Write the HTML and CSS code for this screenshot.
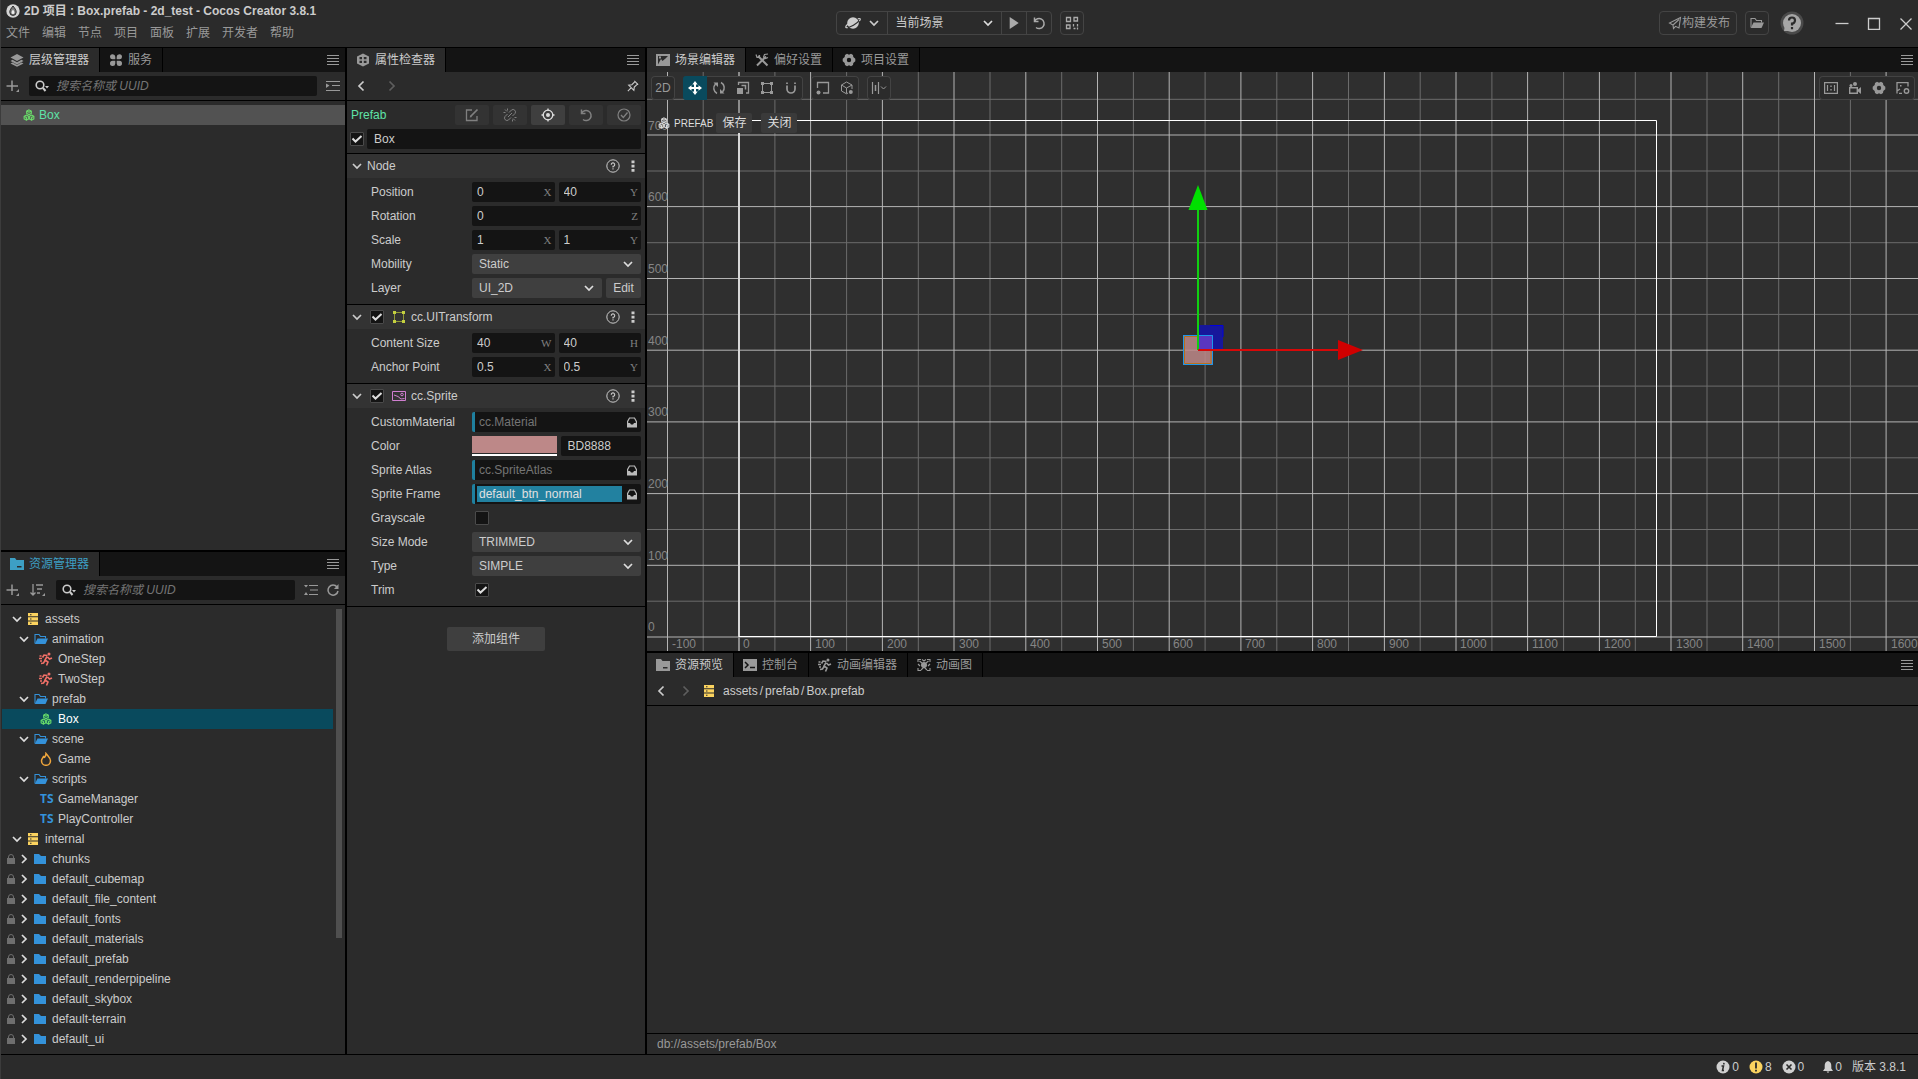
FILE: index.html
```html
<!DOCTYPE html>
<html lang="zh-CN">
<head>
<meta charset="utf-8">
<title>2D 项目 : Box.prefab - 2d_test - Cocos Creator 3.8.1</title>
<link rel="stylesheet" href="styles.css">
</head>
<body>
<svg class="sprite" aria-hidden="true">
  <symbol id="i-menu" viewBox="0 0 12 12"><path d="M0 1.5H12M0 4.5H12M0 7.5H12M0 10.5H12" stroke="currentColor" stroke-width="1"/></symbol>
  <symbol id="i-layers" viewBox="0 0 14 14"><path d="M7 1 13.500 4.500 7 8 .5 4.500Z" fill="currentColor"/><path d="M2.500 6.800.5 8 7 11.500 13.500 8 11.500 6.800 7 9.300ZM2.500 9.500.5 10.500 7 13.800 13.500 10.500 11.500 9.500 7 12Z" fill="currentColor"/></symbol>
  <symbol id="i-clover" viewBox="0 0 14 14"><g fill="currentColor"><path d="M1 4a2.600 2.600 0 0 1 5.300-.3V6.300H3.500A2.500 2.500 0 0 1 1 4ZM13 4a2.600 2.600 0 0 0-5.300-.3V6.300h2.800A2.500 2.500 0 0 0 13 4ZM1 10.200a2.600 2.600 0 0 0 5.300.3V7.700H3.500A2.500 2.500 0 0 0 1 10.200ZM13 10.200a2.600 2.600 0 0 1-5.300.3V7.700h2.800A2.500 2.500 0 0 1 13 10.200Z"/></g></symbol>
  <symbol id="i-plus" viewBox="0 0 14 14"><path d="M6 1.500V12M.5 7H12" stroke="currentColor" stroke-width="1.500"/><path d="M13 10V13H10Z" fill="currentColor"/></symbol>
  <symbol id="i-sort" viewBox="0 0 16 14"><path d="M3 1V12M.5 9.500 3 12 5.500 9.500M6 2H13M7 6H12M7 10H10" stroke="currentColor" stroke-width="1.300" fill="none"/><path d="M15 10V13H12Z" fill="currentColor"/></symbol>
  <symbol id="i-search" viewBox="0 0 14 14"><circle cx="5" cy="6" r="3.800" fill="none" stroke="currentColor" stroke-width="1.600"/><path d="M8 9 10.500 12" stroke="currentColor" stroke-width="2"/><path d="M10 7H14L12 9.500Z" fill="currentColor"/></symbol>
  <symbol id="i-indent" viewBox="0 0 14 12"><path d="M0 1.500H14M6 5.500H14M0 10.500H14" stroke="currentColor"/><path d="M0 3.500 3.500 5.500 0 8Z" fill="currentColor"/></symbol>
  <symbol id="i-collapse" viewBox="0 0 14 12"><path d="M5 1.500H14M6 6H14M5 10.500H14" stroke="currentColor"/><path d="M0 1H4L2 3.500ZM2 8 4 11H0Z" fill="currentColor"/></symbol>
  <symbol id="i-refresh" viewBox="0 0 12 12"><path d="M10 3A5 5 0 1 0 11 7" fill="none" stroke="currentColor" stroke-width="1.500"/><path d="M11.500 0V5H7Z" fill="currentColor"/></symbol>
  <symbol id="i-prefab" viewBox="0 0 14 14"><g fill="none" stroke="currentColor" stroke-width="1.200"><path fill="currentColor" fill-opacity=".2" d="M7 1 9.700 2.300V5.300L7 6.700 4.300 5.300V2.300ZM4 7 6.600 8.400V11.500L4 13 1.300 11.500V8.400ZM10 7 12.700 8.400V11.500L10 13 7.400 11.500V8.400Z"/><path d="M4.500 2.500 7 3.800 9.500 2.500M1.500 8.600 4 9.900V13M10 13V9.900L12.500 8.600"/></g></symbol>
  <symbol id="i-inspect" viewBox="0 0 14 14"><path fill="currentColor" fill-rule="evenodd" d="M7 .5 13 3.500V10.500L7 13.500 1 10.500V3.500ZM3.500 4V6.300H6V4ZM7.800 4V6.300H10.500V4ZM3.500 7.800V10H6V7.800ZM7.800 7.800V10H10.500V7.800Z"/></symbol>
  <symbol id="i-left" viewBox="0 0 8 12"><path d="M6.500 1.500 2 6 6.500 10.500" fill="none" stroke="currentColor" stroke-width="1.700"/></symbol>
  <symbol id="i-right" viewBox="0 0 8 12"><path d="M1.500 1.500 6 6 1.500 10.500" fill="none" stroke="currentColor" stroke-width="1.700"/></symbol>
  <symbol id="i-down" viewBox="0 0 10 10"><path d="M1 3 5 7 9 3" fill="none" stroke="currentColor" stroke-width="1.700"/></symbol>
  <symbol id="i-fold" viewBox="0 0 10 10"><path d="M3 1 7 5 3 9" fill="none" stroke="currentColor" stroke-width="1.700"/></symbol>
  <symbol id="i-pin" viewBox="0 0 14 14"><path d="M8.500 1 13 5.500M9.300 1.800 5.700 5.500 2 6 8 12 8.500 8.300 12.200 4.700M5 9 1 13" fill="none" stroke="currentColor" stroke-width="1.300"/></symbol>
  <symbol id="i-edit" viewBox="0 0 14 14"><path d="M7 2H1.500V12.500H12V8" fill="none" stroke="currentColor" stroke-width="1.300"/><path d="M6 8 12.500 1.500" stroke="currentColor" stroke-width="1.700"/><path d="M4.700 9.500 5.300 7 7.200 8.900Z" fill="currentColor"/></symbol>
  <symbol id="i-unlink" viewBox="0 0 14 14"><path d="M6 4.500 8.500 2A2.500 2.500 0 0 1 12 5.500L9.500 8M8 9.500 5.500 12A2.500 2.500 0 0 1 2 8.500L4.500 6M5 9 9 5M2 1.500 4 3.500M4.500.5V2.500M.5 4.500H2.500M12 12.500 10 10.500M9.500 13.500V11.500M13.500 9.500H11.500" fill="none" stroke="currentColor" stroke-width="1"/></symbol>
  <symbol id="i-target" viewBox="0 0 14 14"><circle cx="7" cy="7" r="4.800" fill="none" stroke="currentColor" stroke-width="1.300"/><circle cx="7" cy="7" r="2" fill="currentColor"/><path d="M7 .5V3M7 11V13.500M.5 7H3M11 7H13.500" stroke="currentColor" stroke-width="1.300"/></symbol>
  <symbol id="i-undo" viewBox="0 0 14 14"><path d="M2.500 1.500V5.500H6.500M2.500 5.500A5 5 0 1 1 4 11.500" fill="none" stroke="currentColor" stroke-width="1.500"/></symbol>
  <symbol id="i-ok" viewBox="0 0 14 14"><circle cx="7" cy="7" r="6" fill="none" stroke="currentColor" stroke-width="1.200"/><path d="M4 7 6.300 9.500 10.500 4.500" fill="none" stroke="currentColor" stroke-width="1.300"/></symbol>
  <symbol id="i-help" viewBox="0 0 14 14"><circle cx="7" cy="7" r="6.200" fill="none" stroke="currentColor"/><path d="M5.300 5.700A1.700 1.700 0 1 1 7 7.300V8.500M7 9.300V10.500" fill="none" stroke="currentColor" stroke-width="1.100"/></symbol>
  <symbol id="i-more" viewBox="0 0 4 14"><path fill="currentColor" d="M.5 1.500h3v2.700h-3ZM.5 5.700h3v2.700h-3ZM.5 10h3v2.700h-3Z"/></symbol>
  <symbol id="i-uitrans" viewBox="0 0 12 12"><path d="M1.500 1.500H10.500V10.500H1.500Z" fill="none" stroke="#8f9738"/><path fill="#c3cf3f" d="M0 0h3v3H0ZM9 0h3v3H9ZM0 9h3v3H0ZM9 9h3v3H9Z"/></symbol>
  <symbol id="i-spr" viewBox="0 0 14 12"><path d="M.5 1.500H13.500V10.500H.5Z" fill="none" stroke="#d07fd0"/><path d="M2 5 6 6.500 9 9 12.500 8.500" fill="none" stroke="#d07fd0"/><circle cx="10" cy="4.500" r="1.300" fill="none" stroke="#d07fd0"/></symbol>
  <symbol id="i-tray" viewBox="0 0 12 12"><path d="M1.600 8V5.500L3.500 2H8.500L10.400 5.500V8" fill="none" stroke="currentColor" stroke-width="1.200"/><path d="M1 7H4L5 8.500H7L8 7H11V11.500H1Z" fill="currentColor"/></symbol>
  <symbol id="i-foldert" viewBox="0 0 14 12"><path fill="currentColor" fill-rule="evenodd" d="M0 0H5L6.500 2H14V12H0ZM7 8V9.500H11.500V8Z"/></symbol>
  <symbol id="i-folder" viewBox="0 0 12 12"><path fill="#3492da" d="M0 1H5L7 3H12V11H0Z"/></symbol>
  <symbol id="i-open" viewBox="0 0 14 12"><path d="M1 10.500V1.500H5L6.500 3.500H11.500V5.500" fill="none" stroke="currentColor" stroke-width="1.100"/><path fill="currentColor" d="M3.500 5.500H14L11.500 11H.8Z"/></symbol>
  <symbol id="i-db" viewBox="0 0 12 12"><path fill="#fbd35f" fill-rule="evenodd" d="M1 0H11V3.300H1ZM3 1.200V2.200H4.500V1.200ZM1 4.300H11V7.600H1ZM3 5.500V6.500H4.500V5.500ZM1 8.600H11V12H1ZM3 9.800V10.800H4.500V9.800Z"/></symbol>
  <symbol id="i-run" viewBox="0 0 14 14"><circle cx="10" cy="2" r="1.500" fill="currentColor"/><path d="M8.500 3.500 5 3 3.500 5.500M8 4.500 6 8 9 10 7.500 13.500M8.500 5 10.500 7 13 6M6 8.500 4.500 11 2 11.500M.5 4H2.500M0 6.500H3M1 9H3" fill="none" stroke="currentColor" stroke-width="1.600"/></symbol>
  <symbol id="i-fire" viewBox="0 0 12 14"><path d="M6 1.500C8.500 4.500 10.500 6 10.500 8.800A4.400 4.400 0 0 1 1.500 8.800C1.500 6.500 3 6 3.500 4.500L4.700 5.200C5.500 4 6 3 6 1.500Z" fill="none" stroke="#f0a63c" stroke-width="1.500"/></symbol>
  <symbol id="i-lock" viewBox="0 0 8 10"><path fill="currentColor" d="M0 4H8V10H0Z"/><path d="M1.500 4.500V3A2.500 2.500 0 0 1 6.500 3V4.500" fill="none" stroke="currentColor"/></symbol>
  <symbol id="i-scene" viewBox="0 0 14 12"><path fill="currentColor" fill-rule="evenodd" d="M0 0H14V12H0ZM2 2V10.500L5 5 6.500 7 9.500 4.500 12 2ZM3 2.500H5V4.500H3Z"/></symbol>
  <symbol id="i-tools" viewBox="0 0 14 14"><path d="M3 3 12.500 12.500M11 3.500 2 12.500" stroke="currentColor" stroke-width="2"/><path d="M1 1.500 2 4.500H4.500L4.500 2M13 1 9.500 1.500 8.500 4 10.500 5.500 13 4.500" fill="none" stroke="currentColor" stroke-width="1.200"/></symbol>
  <symbol id="i-gear" viewBox="0 0 14 14"><path fill="currentColor" fill-rule="evenodd" d="M5 .8 7 1.700 9 .8 11 2 11.300 4 13.300 5.700V8.300L11.300 10 11 12 9 13.200 7 12.300 5 13.200 3 12 2.700 10 .7 8.300V5.700L2.700 4 3 2ZM7 4.800A2.200 2.200 0 1 0 7 9.200 2.200 2.200 0 1 0 7 4.800Z"/></symbol>
  <symbol id="i-term" viewBox="0 0 14 12"><path fill="currentColor" d="M0 0H14V12H0Z"/><path d="M2 3 5 6 2 9M7 8.500H12" fill="none" stroke="#141414" stroke-width="1.500"/></symbol>
  <symbol id="i-graph" viewBox="0 0 14 14"><circle cx="7" cy="7" r="3" fill="currentColor"/><path d="M1 4V1.500H4M10 1.500H13V4M1 10V12.500H4M10 12.500H13V10M2.500 3 5 5M11.500 3 9 5M4 12 7 9 10 12M5 1.500 7 3 9 1.500M1 6 3 8M13 6 11 8" fill="none" stroke="currentColor" stroke-width="1.100"/></symbol>
  <symbol id="i-move" viewBox="0 0 14 14"><path fill="currentColor" d="M7 0 9.700 3.500H8V6H10.500V4.300L14 7 10.500 9.700V8H8V10.500H9.700L7 14 4.300 10.500H6V8H3.500V9.700L0 7 3.500 4.300V6H6V3.500H4.300Z"/></symbol>
  <symbol id="i-rotate" viewBox="0 0 14 14"><path d="M5 12.500A6 6 0 0 1 3.500 3M9 1.500A6 6 0 0 1 10.500 11" fill="none" stroke="currentColor" stroke-width="1.500"/><path d="M1.500 1.500H6V6ZM12.500 12.500H8V8Z" fill="currentColor"/></symbol>
  <symbol id="i-scale" viewBox="0 0 14 14"><path d="M2.500 4V1.500H12.500V12H10" fill="none" stroke="currentColor" stroke-width="1.300"/><path d="M1 7H7V13H1Z" fill="currentColor"/><path d="M5.500 4.500H9.500V8.500" fill="none" stroke="currentColor" stroke-width="1.500"/></symbol>
  <symbol id="i-rect" viewBox="0 0 14 14"><path d="M2.500 2.500H11.500V11.500H2.500Z" fill="none" stroke="currentColor"/><path fill="currentColor" d="M1 1h3v3H1ZM10 1h3v3h-3ZM1 10h3v3H1ZM10 10h3v3h-3Z"/></symbol>
  <symbol id="i-magnet" viewBox="0 0 14 14"><path d="M3 1.500V3M11 1.500V3M3 4.500V8A4 4 0 0 0 11 8V4.500" fill="none" stroke="currentColor" stroke-width="1.700"/></symbol>
  <symbol id="i-pivot" viewBox="0 0 14 14"><path d="M1.500 7V1.500H12.500V12H7" fill="none" stroke="currentColor" stroke-width="1.300"/><circle cx="2.500" cy="11.500" r="2" fill="currentColor"/></symbol>
  <symbol id="i-cube" viewBox="0 0 14 14"><path d="M12 8V4L6.500 1 1.500 4V10L6.500 12.800 8 12M1.500 4 6.500 7 12 4M6.500 7V12.500" fill="none" stroke="currentColor"/><circle cx="10.800" cy="11" r="2" fill="currentColor"/></symbol>
  <symbol id="i-align" viewBox="0 0 16 14"><path d="M1.500 1V13M7.500 1V13" stroke="currentColor" stroke-width="1.200"/><path d="M4.500 4V10" stroke="currentColor" stroke-width="1.500"/><path d="M10 5.500 12.500 8 15 5.500" fill="none" stroke="currentColor"/></symbol>
  <symbol id="i-one" viewBox="0 0 14 12"><path d="M.6.6H13.400V11.400H.6ZM3.500 3V9M10.500 3V9" fill="none" stroke="currentColor" stroke-width="1.200"/><path d="M6.300 3.500h1.400v1.400H6.300ZM6.300 7h1.400v1.400H6.300Z" fill="currentColor"/></symbol>
  <symbol id="i-cam" viewBox="0 0 14 12"><path d="M1.700 5.700H9.300V11.300H1.700Z" fill="none" stroke="currentColor" stroke-width="1.400"/><path fill="currentColor" d="M10 7.500 13 5V12L10 9.500Z"/><circle cx="3" cy="3.500" r="1.500" fill="currentColor"/><circle cx="7" cy="2" r="2" fill="currentColor"/></symbol>
  <symbol id="i-shot" viewBox="0 0 14 12"><path d="M1 11.500V.7H12V4.500M1 9 4 7M3 11.300H6" fill="none" stroke="currentColor" stroke-width="1.300"/><path fill="currentColor" d="M4 3h1.500v1.500H4Z"/><circle cx="10.500" cy="9" r="2.200" fill="none" stroke="currentColor" stroke-width="1.400"/></symbol>
  <symbol id="i-planet" viewBox="0 0 16 14"><circle cx="8" cy="7" r="5.800" fill="currentColor"/><path d="M1.500 11.500C5 11.500 12 8 15 3.500" fill="none" stroke="#2b2b2b" stroke-width="1.200"/><path d="M3 8C0 10.500 0 12 2.800 11.700M12.800 2.800C15.500 2 16 3 14.300 5" fill="none" stroke="currentColor" stroke-width="1.200"/></symbol>
  <symbol id="i-play" viewBox="0 0 12 14"><path fill="currentColor" d="M1 0 11.500 7 1 14Z"/></symbol>
  <symbol id="i-qr" viewBox="0 0 14 14"><path d="M1.500 1.500H5.500V5.500H1.500ZM9 1.500H12.500V5H9ZM1.500 9H5V12.500H1.500ZM8.500 8V10.500M12.500 8V10.500M8.500 12.500H10.500M12.500 11.500V13.500" fill="none" stroke="currentColor" stroke-width="1.300"/></symbol>
  <symbol id="i-send" viewBox="0 0 14 14"><path d="M12.500 1.500 1.500 7 5 9 5.500 12.500 7.500 10.300 11 12ZM5 9 11 3.500" fill="none" stroke="currentColor" stroke-width="1.100"/></symbol>
  <symbol id="i-drop" viewBox="0 0 14 14"><circle cx="7" cy="7" r="6.700" fill="#d4d4d4"/><path d="M7 2C9 4.500 10.200 6 10.200 8.200A3.200 3.200 0 0 1 3.800 8.200C3.800 6 5 4.500 7 2Z" fill="#777" stroke="#2b2b2b"/><path d="M7 5.500C8 7 8.500 7.600 8.500 8.500A1.500 1.500 0 0 1 5.500 8.500C5.500 7.600 6 7 7 5.500Z" fill="#eee"/></symbol>
  <symbol id="i-q" viewBox="0 0 24 24"><circle cx="12" cy="12" r="11.500" fill="#4a4a4a"/><circle cx="12" cy="12" r="9" fill="#a6a6a6"/><path d="M4 20 5 14 10 20Z" fill="#a6a6a6"/><path d="M9 9.500A3 3 0 1 1 12 12.500V14.500M12 16V18.300" fill="none" stroke="#2b2b2b" stroke-width="2.200"/></symbol>
  <symbol id="i-info" viewBox="0 0 14 14"><circle cx="7" cy="7" r="6.500" fill="#d0d0d0"/><path d="M8 2.800 7.700 4.500M5.500 6H7.500L6.500 10.500H8" fill="none" stroke="#2b2b2b" stroke-width="1.500"/></symbol>
  <symbol id="i-warn" viewBox="0 0 14 14"><circle cx="7" cy="7" r="6.500" fill="#fbd35f"/><path d="M7 2.500V8.500M7 9.800V11.500" stroke="#2b2b2b" stroke-width="1.800"/></symbol>
  <symbol id="i-err" viewBox="0 0 14 14"><circle cx="7" cy="7" r="6.500" fill="#d0d0d0"/><path d="M4.500 4.500 9.500 9.500M9.500 4.500 4.500 9.500" stroke="#2b2b2b" stroke-width="1.600"/></symbol>
  <symbol id="i-bell" viewBox="0 0 10 12"><path fill="#d0d0d0" d="M5 0C7.500.8 8.300 2.500 8.300 5V7.500L10 10H0L1.700 7.500V5C1.700 2.500 2.500.8 5 0ZM3.500 10.500H6.500L5 12Z"/></symbol>
</svg>

<div class="app">
  <header class="titlebar">
    <div class="brand">
      <h1 class="title"><svg class="ic14"><use href="#i-drop"/></svg>2D 项目 : Box.prefab - 2d_test - Cocos Creator 3.8.1</h1>
      <nav class="menus"><button>文件</button><button>编辑</button><button>节点</button><button>项目</button><button>面板</button><button>扩展</button><button>开发者</button><button>帮助</button></nav>
    </div>
    <div class="runbar">
      <div class="rungroup">
        <button class="platform" aria-label="预览平台"><svg class="ic16"><use href="#i-planet"/></svg><svg class="ic10"><use href="#i-down"/></svg></button>
        <select class="scene-select" aria-label="场景"><option>当前场景</option></select>
        <button class="run" aria-label="运行"><svg class="ic12"><use href="#i-play"/></svg></button>
        <button class="run" aria-label="刷新"><svg class="ic14"><use href="#i-undo"/></svg></button>
      </div>
      <button class="square" aria-label="二维码"><svg class="ic14"><use href="#i-qr"/></svg></button>
    </div>
    <div class="winbar">
      <button class="build"><svg class="ic14"><use href="#i-send"/></svg>构建发布</button>
      <button class="square" aria-label="打开项目"><svg class="ic14"><use href="#i-open"/></svg></button>
      <button class="helpbtn" aria-label="帮助"><svg class="ic24"><use href="#i-q"/></svg></button>
      <div class="wincontrols">
        <button aria-label="最小化"><svg class="ic14" viewBox="0 0 14 14"><path d="M.5 7.500H13.500" stroke="currentColor" stroke-width="1.300"/></svg></button>
        <button aria-label="最大化"><svg class="ic14" viewBox="0 0 14 14"><path d="M1.500 2.500H12.500V13.500H1.500Z" fill="none" stroke="currentColor" stroke-width="1.300"/></svg></button>
        <button aria-label="关闭窗口"><svg class="ic14" viewBox="0 0 14 14"><path d="M1.500 2.500 12.500 13.500M12.500 2.500 1.500 13.500" stroke="currentColor" stroke-width="1.300"/></svg></button>
      </div>
    </div>
  </header>

  <main class="workspace">
    <div class="stack left">
      <section class="panel">
        <div class="tabs">
          <button class="tab active"><svg class="ic14"><use href="#i-layers"/></svg>层级管理器</button>
          <button class="tab"><svg class="ic14"><use href="#i-clover"/></svg>服务</button>
          <button class="tabmenu" aria-label="菜单"><svg class="ic12"><use href="#i-menu"/></svg></button>
        </div>
        <div class="toolbar">
          <button aria-label="新建节点"><svg class="ic14"><use href="#i-plus"/></svg></button>
          <label class="search"><svg class="ic14"><use href="#i-search"/></svg><input type="text" placeholder="搜索名称或 UUID" aria-label="搜索节点"></label>
          <button aria-label="展开"><svg class="ic14"><use href="#i-indent"/></svg></button>
        </div>
        <div class="nodes"><div class="noderow"><svg class="ic12 green"><use href="#i-prefab"/></svg>Box</div></div>
      </section>
      <section class="panel">
        <div class="tabs">
          <button class="tab active focus"><svg class="ic14"><use href="#i-foldert"/></svg>资源管理器</button>
          <button class="tabmenu" aria-label="菜单"><svg class="ic12"><use href="#i-menu"/></svg></button>
        </div>
        <div class="toolbar">
          <button aria-label="新建资源"><svg class="ic14"><use href="#i-plus"/></svg></button>
          <button class="sort" aria-label="排序"><svg class="ic16"><use href="#i-sort"/></svg></button>
          <label class="search"><svg class="ic14"><use href="#i-search"/></svg><input type="text" placeholder="搜索名称或 UUID" aria-label="搜索资源"></label>
          <button aria-label="折叠"><svg class="ic14"><use href="#i-collapse"/></svg></button>
          <button class="reload" aria-label="刷新"><svg class="ic12"><use href="#i-refresh"/></svg></button>
        </div>
        <div class="treewrap">
          <ul class="tree">
            <li class="l0"><svg class="ic10"><use href="#i-down"/></svg><svg class="ic12"><use href="#i-db"/></svg><span>assets</span></li>
            <li class="l1"><svg class="ic10"><use href="#i-down"/></svg><svg class="wide blue"><use href="#i-open"/></svg><span>animation</span></li>
            <li class="l2"><svg class="tall red"><use href="#i-run"/></svg><span>OneStep</span></li>
            <li class="l2"><svg class="tall red"><use href="#i-run"/></svg><span>TwoStep</span></li>
            <li class="l1"><svg class="ic10"><use href="#i-down"/></svg><svg class="wide blue"><use href="#i-open"/></svg><span>prefab</span></li>
            <li class="l2 selected"><svg class="ic12 green"><use href="#i-prefab"/></svg><span>Box</span></li>
            <li class="l1"><svg class="ic10"><use href="#i-down"/></svg><svg class="wide blue"><use href="#i-open"/></svg><span>scene</span></li>
            <li class="l2"><svg class="tall"><use href="#i-fire"/></svg><span>Game</span></li>
            <li class="l1"><svg class="ic10"><use href="#i-down"/></svg><svg class="wide blue"><use href="#i-open"/></svg><span>scripts</span></li>
            <li class="l2"><b class="ts">TS</b><span>GameManager</span></li>
            <li class="l2"><b class="ts">TS</b><span>PlayController</span></li>
            <li class="l0"><svg class="ic10"><use href="#i-down"/></svg><svg class="ic12"><use href="#i-db"/></svg><span>internal</span></li>
            <li class="locked"><svg class="lock"><use href="#i-lock"/></svg><svg class="ic10"><use href="#i-fold"/></svg><svg class="ic12"><use href="#i-folder"/></svg><span>chunks</span></li>
            <li class="locked"><svg class="lock"><use href="#i-lock"/></svg><svg class="ic10"><use href="#i-fold"/></svg><svg class="ic12"><use href="#i-folder"/></svg><span>default_cubemap</span></li>
            <li class="locked"><svg class="lock"><use href="#i-lock"/></svg><svg class="ic10"><use href="#i-fold"/></svg><svg class="ic12"><use href="#i-folder"/></svg><span>default_file_content</span></li>
            <li class="locked"><svg class="lock"><use href="#i-lock"/></svg><svg class="ic10"><use href="#i-fold"/></svg><svg class="ic12"><use href="#i-folder"/></svg><span>default_fonts</span></li>
            <li class="locked"><svg class="lock"><use href="#i-lock"/></svg><svg class="ic10"><use href="#i-fold"/></svg><svg class="ic12"><use href="#i-folder"/></svg><span>default_materials</span></li>
            <li class="locked"><svg class="lock"><use href="#i-lock"/></svg><svg class="ic10"><use href="#i-fold"/></svg><svg class="ic12"><use href="#i-folder"/></svg><span>default_prefab</span></li>
            <li class="locked"><svg class="lock"><use href="#i-lock"/></svg><svg class="ic10"><use href="#i-fold"/></svg><svg class="ic12"><use href="#i-folder"/></svg><span>default_renderpipeline</span></li>
            <li class="locked"><svg class="lock"><use href="#i-lock"/></svg><svg class="ic10"><use href="#i-fold"/></svg><svg class="ic12"><use href="#i-folder"/></svg><span>default_skybox</span></li>
            <li class="locked"><svg class="lock"><use href="#i-lock"/></svg><svg class="ic10"><use href="#i-fold"/></svg><svg class="ic12"><use href="#i-folder"/></svg><span>default-terrain</span></li>
            <li class="locked"><svg class="lock"><use href="#i-lock"/></svg><svg class="ic10"><use href="#i-fold"/></svg><svg class="ic12"><use href="#i-folder"/></svg><span>default_ui</span></li>
          </ul>
          <div class="track"><div class="thumb"></div></div>
        </div>
      </section>
    </div>

    <section class="panel inspector">
      <div class="tabs">
        <button class="tab active"><svg class="ic14"><use href="#i-inspect"/></svg>属性检查器</button>
        <button class="tabmenu" aria-label="菜单"><svg class="ic12"><use href="#i-menu"/></svg></button>
      </div>
      <div class="navrow">
        <button aria-label="后退"><svg class="arrow"><use href="#i-left"/></svg></button>
        <button class="dim" aria-label="前进"><svg class="arrow"><use href="#i-right"/></svg></button>
        <button class="pin" aria-label="锁定"><svg class="ic12"><use href="#i-pin"/></svg></button>
      </div>
      <div class="prefabrow">
        <span class="prefabname">Prefab</span>
        <button class="op" aria-label="编辑" disabled><svg class="ic14"><use href="#i-edit"/></svg></button>
        <button class="op" aria-label="取消关联" disabled><svg class="ic14"><use href="#i-unlink"/></svg></button>
        <button class="op on" aria-label="定位"><svg class="ic14"><use href="#i-target"/></svg></button>
        <button class="op" aria-label="还原" disabled><svg class="ic14"><use href="#i-undo"/></svg></button>
        <button class="op" aria-label="应用" disabled><svg class="ic14"><use href="#i-ok"/></svg></button>
      </div>
      <div class="namerow"><input type="checkbox" checked aria-label="启用节点"><input class="field" type="text" value="Box" aria-label="节点名称"></div>

      <section class="group">
        <h2 class="grouphead"><svg class="ic10"><use href="#i-down"/></svg><span class="gname">Node</span><svg class="ic14"><use href="#i-help"/></svg><svg class="more"><use href="#i-more"/></svg></h2>
        <div class="prop"><label for="px">Position</label><div class="val"><div class="num"><input id="px" value="0"><span>X</span></div><div class="num"><input value="40" aria-label="Position Y"><span>Y</span></div></div></div>
        <div class="prop"><label for="rz">Rotation</label><div class="val"><div class="num"><input id="rz" value="0"><span>Z</span></div></div></div>
        <div class="prop"><label for="sx">Scale</label><div class="val"><div class="num"><input id="sx" value="1"><span>X</span></div><div class="num"><input value="1" aria-label="Scale Y"><span>Y</span></div></div></div>
        <div class="prop"><label for="mob">Mobility</label><div class="val"><select id="mob"><option>Static</option></select></div></div>
        <div class="prop"><label for="lay">Layer</label><div class="val"><select id="lay"><option>UI_2D</option></select><button class="editbtn">Edit</button></div></div>
      </section>

      <section class="group">
        <h2 class="grouphead"><svg class="ic10"><use href="#i-down"/></svg><input type="checkbox" checked aria-label="cc.UITransform"><svg class="ic12 uit"><use href="#i-uitrans"/></svg><span class="gname">cc.UITransform</span><svg class="ic14"><use href="#i-help"/></svg><svg class="more"><use href="#i-more"/></svg></h2>
        <div class="prop"><label for="cw">Content Size</label><div class="val"><div class="num"><input id="cw" value="40"><span>W</span></div><div class="num"><input value="40" aria-label="Height"><span>H</span></div></div></div>
        <div class="prop"><label for="ax">Anchor Point</label><div class="val"><div class="num"><input id="ax" value="0.5"><span>X</span></div><div class="num"><input value="0.5" aria-label="Anchor Y"><span>Y</span></div></div></div>
      </section>

      <section class="group">
        <h2 class="grouphead"><svg class="ic10"><use href="#i-down"/></svg><input type="checkbox" checked aria-label="cc.Sprite"><svg class="ic14"><use href="#i-spr"/></svg><span class="gname">cc.Sprite</span><svg class="ic14"><use href="#i-help"/></svg><svg class="more"><use href="#i-more"/></svg></h2>
        <div class="prop"><label for="mat">CustomMaterial</label><div class="val"><div class="asset"><input id="mat" placeholder="cc.Material" readonly><svg class="ic12"><use href="#i-tray"/></svg></div></div></div>
        <div class="prop"><label for="col">Color</label><div class="val colorval"><button class="swatch" aria-label="选择颜色"></button><input class="field" id="col" type="text" value="BD8888"></div></div>
        <div class="prop"><label for="atl">Sprite Atlas</label><div class="val"><div class="asset"><input id="atl" placeholder="cc.SpriteAtlas" readonly><svg class="ic12"><use href="#i-tray"/></svg></div></div></div>
        <div class="prop"><label for="frm">Sprite Frame</label><div class="val"><div class="asset filled"><input id="frm" value="default_btn_normal" readonly><svg class="ic12"><use href="#i-tray"/></svg></div></div></div>
        <div class="prop"><label for="gry">Grayscale</label><div class="val chk"><input type="checkbox" id="gry"></div></div>
        <div class="prop"><label for="szm">Size Mode</label><div class="val"><select id="szm"><option>TRIMMED</option></select></div></div>
        <div class="prop"><label for="typ">Type</label><div class="val"><select id="typ"><option>SIMPLE</option></select></div></div>
        <div class="prop"><label for="trm">Trim</label><div class="val chk"><input type="checkbox" id="trm" checked></div></div>
      </section>
      <div class="addrow"><button class="addbtn">添加组件</button></div>
    </section>

    <div class="stack right">
      <section class="panel">
        <div class="tabs">
          <button class="tab active"><svg class="ic14"><use href="#i-scene"/></svg>场景编辑器</button>
          <button class="tab"><svg class="ic14"><use href="#i-tools"/></svg>偏好设置</button>
          <button class="tab"><svg class="ic14"><use href="#i-gear"/></svg>项目设置</button>
          <button class="tabmenu" aria-label="菜单"><svg class="ic12"><use href="#i-menu"/></svg></button>
        </div>
        <div class="viewport">
          <svg class="grid" aria-label="场景">
            <path class="minor" d="M56.200 0V579M127.900 0V579M199.600 0V579M271.300 0V579M343 0V579M414.700 0V579M486.400 0V579M558.100 0V579M629.800 0V579M701.500 0V579M773.200 0V579M844.900 0V579M916.600 0V579M988.300 0V579M1060 0V579M1131.700 0V579M1203.400 0V579M0 529.200H2400M0 457.500H2400M0 385.800H2400M0 314.100H2400M0 242.400H2400M0 170.700H2400M0 99H2400M0 27.300H2400"/>
            <path class="major" d="M20.500 0V579M163.600 0V579M235.400 0V579M307 0V579M378.800 0V579M450.500 0V579M522.200 0V579M593.900 0V579M665.600 0V579M737.400 0V579M809 0V579M880.600 0V579M952.400 0V579M1024 0V579M1095.700 0V579M1167.500 0V579M1239.100 0V579M0 565H2400M0 493.300H2400M0 421.600H2400M0 349.900H2400M0 278.200H2400M0 206.500H2400M0 134.600H2400M0 63H2400"/>
            <path d="M92 0V48M92 565V579" stroke="#8c8c8c" stroke-width="2"/>
            <path d="M92 48V565" stroke="#d8d8d8" stroke-width="2"/>
            <path class="frame" d="M92 48.500H1009.500V564.500H92"/>
            <g class="ruler">
              <text x="25" y="576">-100</text><text x="96" y="576">0</text><text x="168" y="576">100</text><text x="240" y="576">200</text><text x="312" y="576">300</text><text x="383" y="576">400</text><text x="455" y="576">500</text><text x="526" y="576">600</text><text x="598" y="576">700</text><text x="670" y="576">800</text><text x="742" y="576">900</text><text x="813" y="576">1000</text><text x="885" y="576">1100</text><text x="957" y="576">1200</text><text x="1029" y="576">1300</text><text x="1100" y="576">1400</text><text x="1172" y="576">1500</text><text x="1244" y="576">1600</text>
              <text x="1" y="559">0</text><text x="1" y="488">100</text><text x="1" y="416">200</text><text x="1" y="344">300</text><text x="1" y="273">400</text><text x="1" y="201">500</text><text x="1" y="129">600</text><text x="1" y="58">700</text>
            </g>
            <path d="M552 253H576V277H552Z" fill="#17179b"/>
            <path d="M563 253.500H576V265" fill="none" stroke="#0000e0"/>
            <path d="M536 263H566V293H536Z" fill="#bd8888" fill-opacity=".85"/>
            <path d="M552 263H566V277H552Z" fill="#5a36c0"/>
            <path d="M537.500 291V264.500H552M537.500 291.500H564V279" fill="none" stroke="#b86f1c"/>
            <path d="M536.500 263.500H565.500V292.500H536.500Z" fill="none" stroke="#1c96ec"/>
            <path d="M551 278V137" stroke="#10d010" stroke-width="2"/>
            <path d="M551 113 560.500 138H541.500Z" fill="#00e000"/>
            <path d="M551 278H692" stroke="#d80808" stroke-width="2"/>
            <path d="M716 278 691 268V288Z" fill="#d00000"/>
          </svg>
          <div class="overlay">
            <div class="gizmobar">
              <button class="tools text2d">2D</button>
              <div class="tools">
                <button class="current" aria-label="移动"><svg class="ic14"><use href="#i-move"/></svg></button><button aria-label="旋转"><svg class="ic14"><use href="#i-rotate"/></svg></button><button aria-label="缩放"><svg class="ic14"><use href="#i-scale"/></svg></button><button aria-label="矩形"><svg class="ic14"><use href="#i-rect"/></svg></button><button aria-label="吸附"><svg class="ic14"><use href="#i-magnet"/></svg></button>
              </div>
              <div class="tools"><button aria-label="轴心"><svg class="ic14"><use href="#i-pivot"/></svg></button><button aria-label="坐标系"><svg class="ic14"><use href="#i-cube"/></svg></button></div>
              <div class="tools"><button aria-label="对齐"><svg class="ic16"><use href="#i-align"/></svg></button></div>
              <div class="tools viewtools"><button aria-label="实际大小"><svg class="ic14"><use href="#i-one"/></svg></button><button aria-label="相机"><svg class="ic14"><use href="#i-cam"/></svg></button><button aria-label="设置"><svg class="ic14"><use href="#i-gear"/></svg></button><button aria-label="参考图"><svg class="ic14"><use href="#i-shot"/></svg></button></div>
            </div>
            <div class="modebar"><svg class="ic12"><use href="#i-prefab"/></svg><span>PREFAB</span><button>保存</button><button>关闭</button></div>
          </div>
        </div>
      </section>
      <section class="panel">
        <div class="tabs">
          <button class="tab active"><svg class="ic14"><use href="#i-foldert"/></svg>资源预览</button>
          <button class="tab"><svg class="ic14"><use href="#i-term"/></svg>控制台</button>
          <button class="tab"><svg class="ic14"><use href="#i-run"/></svg>动画编辑器</button>
          <button class="tab"><svg class="ic14"><use href="#i-graph"/></svg>动画图</button>
          <button class="tabmenu" aria-label="菜单"><svg class="ic12"><use href="#i-menu"/></svg></button>
        </div>
        <div class="navrow preview">
          <button aria-label="后退"><svg class="arrow"><use href="#i-left"/></svg></button>
          <button class="dim" aria-label="前进"><svg class="arrow"><use href="#i-right"/></svg></button>
          <svg class="ic12"><use href="#i-db"/></svg>
          <div class="crumbs"><span>assets</span><span>/</span><span>prefab</span><span>/</span><span>Box.prefab</span></div>
        </div>
        <div class="previewbody"></div>
        <div class="path">db://assets/prefab/Box</div>
      </section>
    </div>
  </main>

  <footer class="status">
    <span class="stat"><svg class="ic14"><use href="#i-info"/></svg>0</span>
    <span class="stat"><svg class="ic14"><use href="#i-warn"/></svg>8</span>
    <span class="stat"><svg class="ic14"><use href="#i-err"/></svg>0</span>
    <span class="stat bell"><svg class="ic12"><use href="#i-bell"/></svg>0</span>
    <span>版本 3.8.1</span>
  </footer>
</div>
</body>
</html>
```
FILE: styles.css
```css
* { box-sizing: border-box; }

body {
  margin: 0;
  background: #000;
  color: #ccc;
  font: 12px/20px "Liberation Sans", "Noto Sans CJK SC", sans-serif;
}

h1, h2, ul { margin: 0; padding: 0; font-size: 12px; list-style: none; }
h2 { font-weight: 400; }

button, input, select { font: inherit; color: inherit; margin: 0; }
button { display: flex; align-items: center; justify-content: center; padding: 0; border: 0; background: none; }
svg { flex: none; display: block; }

.sprite { position: absolute; width: 0; height: 0; }
.ic10 { width: 10px; height: 10px; }
.ic12 { width: 12px; height: 12px; }
.ic14 { width: 14px; height: 14px; }
.ic16 { width: 16px; height: 14px; }
.ic24 { width: 24px; height: 24px; }
.green { color: #6be06b; }
.blue { color: #3492da; }
.red { color: #f07068; }

.app {
  display: grid;
  grid-template-rows: 48px minmax(0, 1fr) 25px;
  height: 100vh;
  overflow: hidden;
  border-left: 1px solid #3c3c3c;
}

/* Title bar */
.titlebar {
  display: grid;
  grid-template-columns: 1fr auto 1fr;
  background: #2b2b2b;
  border-bottom: 1px solid #000;
}
.brand { padding: 1px 0 0 5px; }
.title { display: flex; align-items: center; gap: 4px; height: 20px; white-space: nowrap; }
.menus { display: flex; gap: 12px; height: 24px; color: #999; }
.menus button { white-space: nowrap; }
.runbar { display: flex; gap: 8px; align-items: center; padding-bottom: 1px; color: #aaa; }
.rungroup { display: flex; height: 24px; border: 1px solid #444; border-radius: 4px; }
.rungroup > * + * { border-left: 1px solid #444; }
.platform { width: 50px; gap: 8px; color: #ccc; }
.rungroup .scene-select { width: 114px; background-color: transparent; border-radius: 0; padding-left: 8px; border-left: 1px solid #444; color: #ccc; }
.run { width: 25px; }
.square { width: 24px; height: 24px; border: 1px solid #444; border-radius: 4px; }
.winbar { display: flex; justify-content: flex-end; align-items: center; gap: 8px; padding: 0 5px 1px 0; color: #999; }
.build { height: 24px; padding: 0 6px 0 8px; border: 1px solid #444; border-radius: 4px; }
.helpbtn { margin-left: 3px; }
.wincontrols { display: flex; gap: 18px; padding-left: 23px; color: #ccc; }

/* Docking layout */
.workspace {
  display: grid;
  grid-template-columns: 344px 298px minmax(0, 1fr);
  gap: 2px;
  min-height: 0;
}
.stack { display: grid; gap: 2px; min-height: 0; }
.left { grid-template-rows: minmax(0, 1fr) minmax(0, 1fr); }
.right { grid-template-rows: minmax(0, 603fr) minmax(0, 401fr); }
.panel { display: flex; flex-direction: column; background: #2b2b2b; min-height: 0; overflow: hidden; }

.tabs { display: flex; flex: none; height: 24px; background: #141414; }
.tab { gap: 5px; padding: 0 10px 0 9px; border-right: 1px solid #000; color: #999; white-space: nowrap; }
.tab.active { background: #2b2b2b; color: #ccc; }
.tab.active svg { color: #999; }
.tab.focus, .tab.focus svg { color: #3d9fc4; }
.tabmenu { margin-left: auto; padding-right: 6px; color: #999; }
.right .tabmenu { padding-right: 5px; }

.toolbar {
  display: flex;
  flex: none;
  align-items: center;
  gap: 9px;
  height: 29px;
  padding: 0 5px;
  border-bottom: 1px solid #000;
  color: #999;
}
.sort { margin: 0 1px; }
.reload { padding-right: 1px; }
.search { display: flex; flex: 1; align-items: center; gap: 7px; height: 20px; padding: 0 6px; background: #141414; border-radius: 2px; min-width: 0; }
.search svg { color: #ccc; }
.search input { flex: 1; min-width: 0; padding: 0; border: 0; background: none; font-style: italic; }
input { outline: 0; }
input::placeholder { color: #757575; opacity: 1; }

/* Hierarchy */
.nodes { padding-top: 4px; }
.noderow { display: flex; align-items: center; gap: 4px; height: 20px; padding-left: 22px; background: #525252; color: #5fe3a8; }

/* Asset tree */
.treewrap { display: flex; flex: 1; gap: 3px; min-height: 0; padding: 4px 3px 0 1px; overflow: hidden; }
.tree { flex: 1; }
.tree li { display: flex; align-items: center; height: 20px; white-space: nowrap; }
.tree span { margin-left: 6px; }
.tree .ic10 { margin-right: 5px; color: #ddd; }
.wide { width: 14px; height: 12px; margin-right: -2px; }
.tall { width: 14px; height: 14px; margin: 0 -1px; }
.l0 { padding-left: 10px; }
.l1 { padding-left: 17px; }
.tree .l2 { padding-left: 38px; }
.selected { background: #094a5d; color: #fff; }
.locked { padding-left: 5px; }
.lock { width: 8px; height: 10px; margin-right: 4px; color: #6e6e6e; }
.ts { width: 12px; color: #3492da; font-family: "Noto Sans", sans-serif; }
.track { width: 6px; }
.thumb { height: 74%; background: #4f4f4f; }

/* Inspector */
.navrow { display: flex; flex: none; align-items: center; height: 29px; padding: 0 6px 0 10px; border-bottom: 1px solid #000; }
.navrow .dim { margin-left: 23px; color: #5e5e5e; }
.arrow { width: 8px; height: 12px; }
.pin { margin-left: auto; }
.prefabrow { display: flex; flex: none; gap: 4px; padding: 4px 4px 0; }
.prefabname { flex: 1; color: #5fe3a8; }
.op { width: 34px; height: 20px; background: #333; border-radius: 2px; color: #808080; }
.op.on { background: #3f3f3f; color: #ddd; }
.namerow { display: flex; flex: none; align-items: center; gap: 3px; padding: 4px 4px 4px 3px; }
.field { flex: 1; min-width: 0; height: 20px; padding: 0 7px; border: 0; border-radius: 2px; background: #141414; }

input[type="checkbox"] {
  flex: none;
  appearance: none;
  width: 14px;
  height: 14px;
  border: 1px solid #4a4a4a;
  border-radius: 1px;
  background: #141414 no-repeat center;
}
input[type="checkbox"]:checked {
  background-image: url("data:image/svg+xml,%3Csvg xmlns='http://www.w3.org/2000/svg' width='12' height='12'%3E%3Cpath d='M1.500 5.500 4.500 8.500 10.500 3' fill='none' stroke='%23ddd' stroke-width='2'/%3E%3C/svg%3E");
}

.group { flex: none; padding-bottom: 6px; border-top: 1px solid #000; }
.group:last-of-type { border-bottom: 1px solid #000; }
.grouphead { display: flex; align-items: center; height: 24px; padding: 0 10px 0 5px; background: #333; }
.grouphead input { margin: 0 8px; }
.grouphead .uit { margin: 0 1px; }
.gname { flex: 1; margin-left: 5px; }
.more { width: 4px; height: 14px; margin-left: 11px; }
.prop { display: grid; grid-template-columns: 101px minmax(0, 1fr); height: 20px; margin: 4px 4px 0 24px; }
.val { display: flex; gap: 4px; min-width: 0; }
.num { display: flex; flex: 1 1 0; min-width: 0; padding: 0 3px 0 5px; background: #141414; border-radius: 2px; }
.num input { flex: 1; min-width: 0; width: 0; padding: 0; border: 0; background: none; }
.num span { color: #808080; font: 11px/20px "Liberation Serif", serif; }
.val.chk { align-items: center; padding-left: 3px; }

select {
  flex: 1;
  min-width: 0;
  padding: 0 7px;
  appearance: none;
  border: 0;
  border-radius: 2px;
  background: #3f3f3f url("data:image/svg+xml,%3Csvg xmlns='http://www.w3.org/2000/svg' width='10' height='10'%3E%3Cpath d='M1 3 5 7 9 3' fill='none' stroke='%23ddd' stroke-width='1.700'/%3E%3C/svg%3E") no-repeat right 8px center;
}
.editbtn { width: 35px; background: #3f3f3f; border-radius: 2px; }
.asset { display: flex; flex: 1; align-items: center; gap: 4px; min-width: 0; padding: 2px 3px 2px 2px; background: #141414; border-left: 3px solid #1f809f; border-radius: 2px; color: #bbb; }
.asset input { flex: 1; min-width: 0; height: 16px; padding: 0 2px; border: 0; background: none; }
.asset.filled input { background: #2281a0; color: #e0e0e0; }
.swatch { flex: none; width: 50%; height: 20px; background: #bd8888; border-bottom: 2px solid #fff; box-shadow: inset 0 -1px #2b2b2b; }
.addrow { display: flex; justify-content: center; padding-top: 20px; }
.addbtn { width: 98px; height: 24px; background: #3f3f3f; border-radius: 2px; }

/* Scene view */
.viewport { position: relative; flex: 1; min-height: 0; background: #2f2f2f; overflow: hidden; }
.grid { position: absolute; inset: 0; width: 100%; height: 100%; }
.minor { stroke: #6c6c6c; fill: none; }
.major { stroke: #b4b4b4; fill: none; }
.frame { stroke: #fff; fill: none; }
.ruler { fill: #858585; font-size: 12px; }
.overlay { position: relative; padding: 4px 3px 0 4px; }
.gizmobar { display: flex; gap: 8px; color: #999; }
.tools { display: flex; height: 24px; border-radius: 4px; background: #2b2b2b; box-shadow: inset 0 0 0 1px #434343; }
.text2d { width: 24px; }
.tools button { width: 24px; }
.tools .current { background: #094a5d; color: #fff; border-radius: 3px 0 0 3px; }
.viewtools { margin-left: auto; }
.modebar { display: flex; align-items: center; height: 20px; margin: 13px 0 0 7px; color: #ddd; }
.modebar span { margin: 0 3px 0 4px; padding-top: 2px; font-size: 10px; }
.modebar button { width: 36px; height: 20px; margin-right: 9px; background: #3a3a3a; border-radius: 2px; }

/* Preview */
.navrow.preview { padding-left: 10px; }
.preview .dim { margin-left: 17px; }
.preview .ic12 { margin-left: 13px; }
.crumbs { display: flex; gap: 2px; margin-left: 8px; }
.previewbody { flex: 1; }
.path { flex: none; height: 21px; padding-left: 10px; border-top: 1px solid #000; color: #999; }

/* Status bar */
.status { display: flex; justify-content: flex-end; align-items: center; gap: 10px; padding-right: 12px; background: #2b2b2b; border-top: 1px solid #000; }
.stat { display: flex; align-items: center; gap: 2px; }
.bell { margin-left: 8px; gap: 1px; }
```
